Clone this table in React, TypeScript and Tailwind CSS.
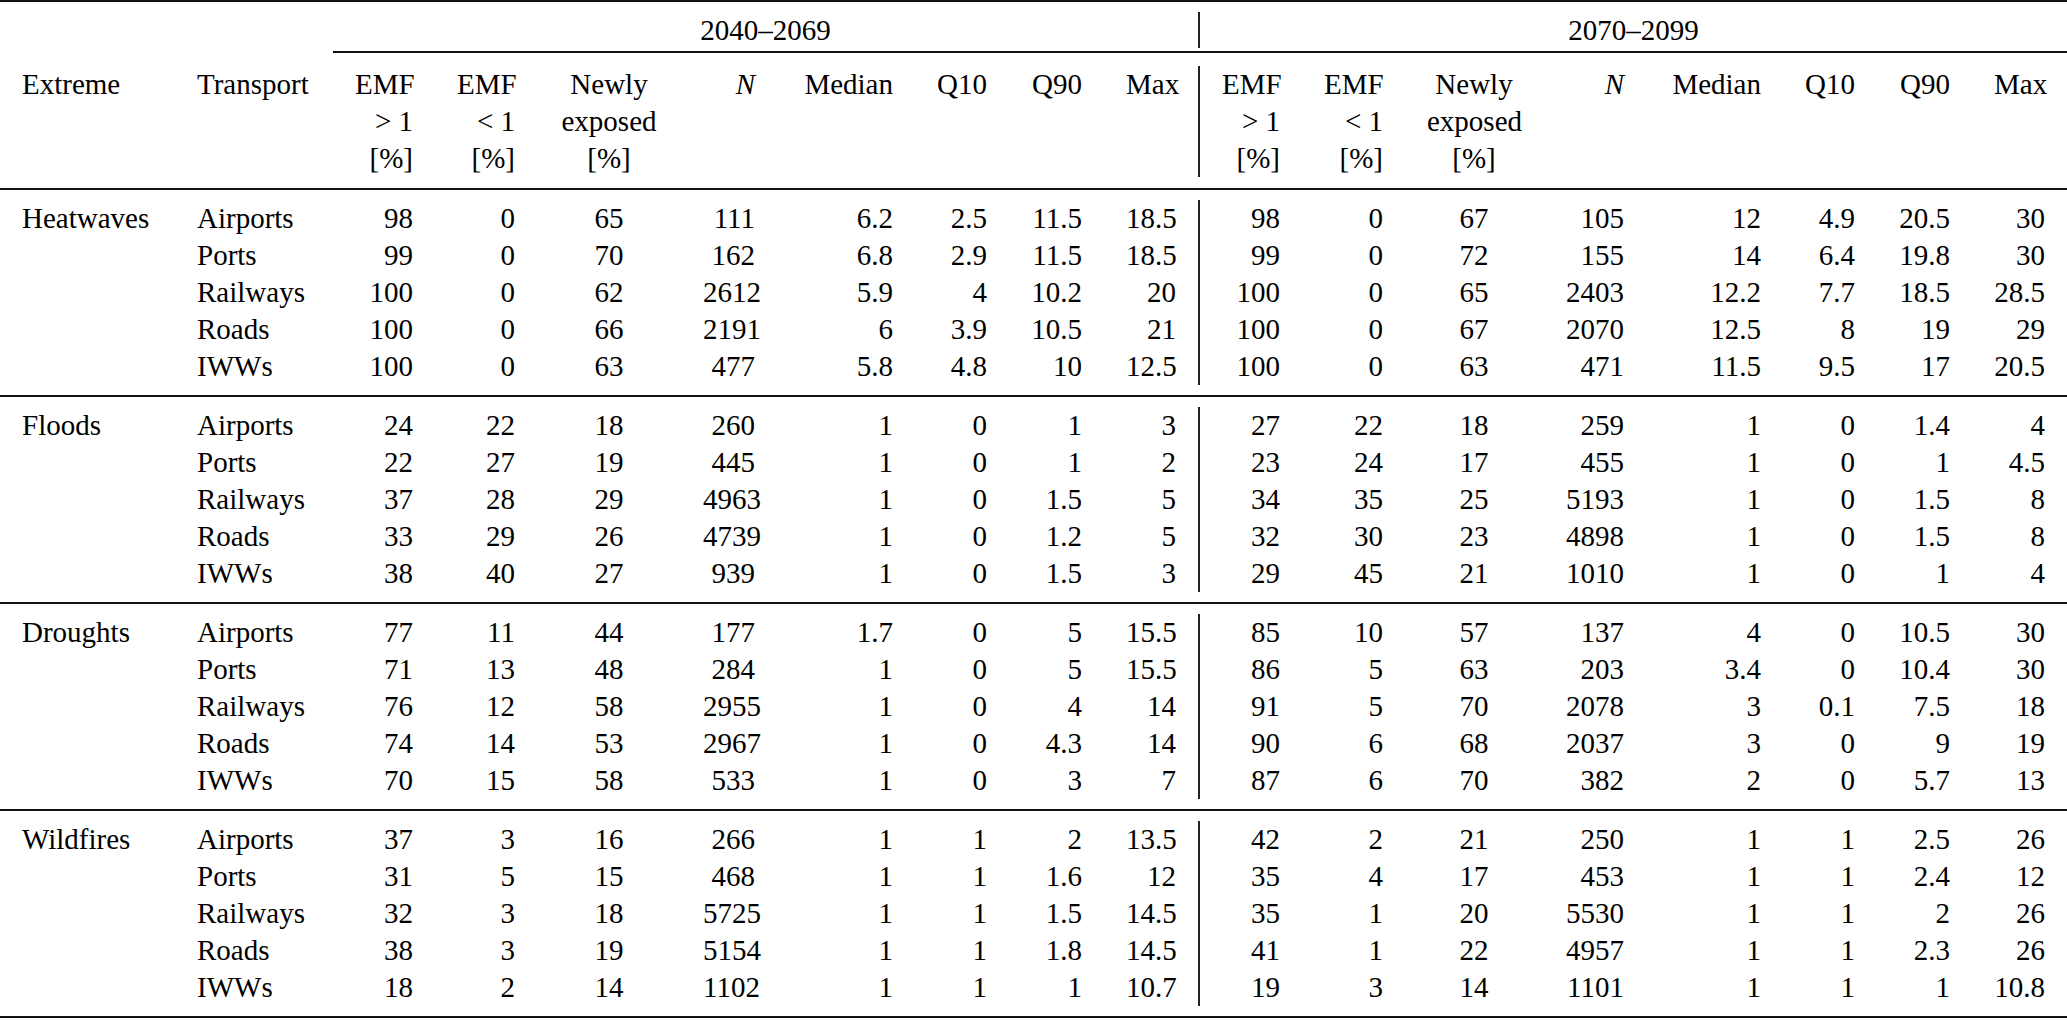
const leftCols = [
  "w-[175px] text-left",
  "w-[158px] text-left",
  "w-[102px] text-right",
  "w-[102px] text-right",
  "w-[144px] text-center",
  "w-[96px] text-right",
  "w-[138px] text-right",
  "w-[94px] text-right",
  "w-[95px] text-right",
  "w-[94px] text-right",
];

const rightCols = [
  "w-[102px] text-right",
  "w-[103px] text-right",
  "w-[138px] text-center",
  "w-[103px] text-right",
  "w-[137px] text-right",
  "w-[94px] text-right",
  "w-[95px] text-right",
  "w-[95px] text-right",
];

type Row = [string, string[], string[]];

const groups: { name: string; rows: Row[] }[] = [
  {
    name: "Heatwaves",
    rows: [
      ["Airports", ["98", "0", "65", "111", "6.2", "2.5", "11.5", "18.5"], ["98", "0", "67", "105", "12", "4.9", "20.5", "30"]],
      ["Ports", ["99", "0", "70", "162", "6.8", "2.9", "11.5", "18.5"], ["99", "0", "72", "155", "14", "6.4", "19.8", "30"]],
      ["Railways", ["100", "0", "62", "2612", "5.9", "4", "10.2", "20"], ["100", "0", "65", "2403", "12.2", "7.7", "18.5", "28.5"]],
      ["Roads", ["100", "0", "66", "2191", "6", "3.9", "10.5", "21"], ["100", "0", "67", "2070", "12.5", "8", "19", "29"]],
      ["IWWs", ["100", "0", "63", "477", "5.8", "4.8", "10", "12.5"], ["100", "0", "63", "471", "11.5", "9.5", "17", "20.5"]],
    ],
  },
  {
    name: "Floods",
    rows: [
      ["Airports", ["24", "22", "18", "260", "1", "0", "1", "3"], ["27", "22", "18", "259", "1", "0", "1.4", "4"]],
      ["Ports", ["22", "27", "19", "445", "1", "0", "1", "2"], ["23", "24", "17", "455", "1", "0", "1", "4.5"]],
      ["Railways", ["37", "28", "29", "4963", "1", "0", "1.5", "5"], ["34", "35", "25", "5193", "1", "0", "1.5", "8"]],
      ["Roads", ["33", "29", "26", "4739", "1", "0", "1.2", "5"], ["32", "30", "23", "4898", "1", "0", "1.5", "8"]],
      ["IWWs", ["38", "40", "27", "939", "1", "0", "1.5", "3"], ["29", "45", "21", "1010", "1", "0", "1", "4"]],
    ],
  },
  {
    name: "Droughts",
    rows: [
      ["Airports", ["77", "11", "44", "177", "1.7", "0", "5", "15.5"], ["85", "10", "57", "137", "4", "0", "10.5", "30"]],
      ["Ports", ["71", "13", "48", "284", "1", "0", "5", "15.5"], ["86", "5", "63", "203", "3.4", "0", "10.4", "30"]],
      ["Railways", ["76", "12", "58", "2955", "1", "0", "4", "14"], ["91", "5", "70", "2078", "3", "0.1", "7.5", "18"]],
      ["Roads", ["74", "14", "53", "2967", "1", "0", "4.3", "14"], ["90", "6", "68", "2037", "3", "0", "9", "19"]],
      ["IWWs", ["70", "15", "58", "533", "1", "0", "3", "7"], ["87", "6", "70", "382", "2", "0", "5.7", "13"]],
    ],
  },
  {
    name: "Wildfires",
    rows: [
      ["Airports", ["37", "3", "16", "266", "1", "1", "2", "13.5"], ["42", "2", "21", "250", "1", "1", "2.5", "26"]],
      ["Ports", ["31", "5", "15", "468", "1", "1", "1.6", "12"], ["35", "4", "17", "453", "1", "1", "2.4", "12"]],
      ["Railways", ["32", "3", "18", "5725", "1", "1", "1.5", "14.5"], ["35", "1", "20", "5530", "1", "1", "2", "26"]],
      ["Roads", ["38", "3", "19", "5154", "1", "1", "1.8", "14.5"], ["41", "1", "22", "4957", "1", "1", "2.3", "26"]],
      ["IWWs", ["18", "2", "14", "1102", "1", "1", "1", "10.7"], ["19", "3", "14", "1101", "1", "1", "1", "10.8"]],
    ],
  },
];

// header lines per column (stacked, 37px apart)
const headLeft: React.ReactNode[][] = [
  ["Extreme"],
  ["Transport"],
  ["EMF", "> 1", "[%]"],
  ["EMF", "< 1", "[%]"],
  ["Newly", "exposed", "[%]"],
  [<i key="n">N</i>],
  ["Median"],
  ["Q10"],
  ["Q90"],
  ["Max"],
];
const headRight = headLeft.slice(2);

function Rule() {
  return <div className="h-[2px] w-full bg-[#111]" />;
}

function Cell({ cls, children }: { cls: string; children: React.ReactNode }) {
  return <div className={`${cls} shrink-0 px-[22px] whitespace-nowrap`}>{children}</div>;
}

function DataRow({ first, row }: { first: string; row: Row }) {
  const left = [first, row[0], ...row[1]];
  return (
    <div className="flex h-[37px] leading-[37px]">
      <div className="flex w-[1198px] shrink-0">
        {left.map((v, i) => (
          <Cell key={i} cls={leftCols[i]}>
            {v}
          </Cell>
        ))}
      </div>
      <div className="flex border-l-2 border-[#222]">
        {row[2].map((v, i) => (
          <Cell key={i} cls={rightCols[i]}>
            {v}
          </Cell>
        ))}
      </div>
    </div>
  );
}

export default function App() {
  return (
    <div className="min-h-screen w-[2067px] bg-white font-['Liberation_Serif','Times_New_Roman',serif] text-[29px] text-black">
      <Rule />

      {/* period spanners */}
      <div className="flex pt-[10px] pb-[3px]">
        <div className="flex w-[1198px] shrink-0 leading-[36px]">
          <div className="w-[333px] shrink-0" />
          <div className="w-[865px] text-center">2040–2069</div>
        </div>
        <div className="w-[869px] border-l-2 border-[#222] text-center leading-[36px]">2070–2099</div>
      </div>
      <div className="ml-[333px] h-[2px] bg-[#111]" />

      {/* column heads */}
      <div className="flex pt-[13px] pb-[11px] leading-[37px]">
        <div className="flex w-[1198px] shrink-0">
          {headLeft.map((lines, i) => (
            <Cell key={i} cls={leftCols[i]}>
              {lines.map((l, j) => (
                <div key={j}>{l}</div>
              ))}
            </Cell>
          ))}
        </div>
        <div className="flex h-[111px] border-l-2 border-[#222]">
          {headRight.map((lines, i) => (
            <Cell key={i} cls={rightCols[i]}>
              {lines.map((l, j) => (
                <div key={j}>{l}</div>
              ))}
            </Cell>
          ))}
        </div>
      </div>
      <Rule />

      {groups.map((g, gi) => (
        <div key={g.name}>
          <div className="py-[10px]">
            {g.rows.map((r, ri) => (
              <DataRow key={ri} first={ri === 0 ? g.name : ""} row={r} />
            ))}
          </div>
          <Rule />
        </div>
      ))}
    </div>
  );
}
